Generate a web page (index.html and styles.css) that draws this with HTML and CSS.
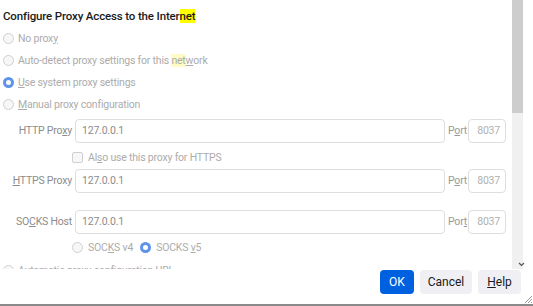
FILE: index.html
```html
<!DOCTYPE html>
<html>
<head>
<meta charset="utf-8">
<link rel="stylesheet" href="styles.css">
</head>
<body>
<div class="dialog">
  <div class="scroller">
    <div class="content">
      <h1 class="title">Configure Proxy Access to the Inter<mark class="hl">net</mark></h1>
      <div class="radio-row"><span class="radio"></span><span>No prox<u>y</u></span></div>
      <div class="radio-row"><span class="radio"></span><span>Auto-detect proxy settings for this <mark class="hl-soft">net</mark><u>w</u>ork</span></div>
      <div class="radio-row"><span class="radio checked"></span><span><u>U</u>se system proxy settings</span></div>
      <div class="radio-row"><span class="radio"></span><span><u>M</u>anual proxy configuration</span></div>

      <div class="field-row">
        <span class="field-label">HTTP Pro<u>x</u>y</span>
        <span class="input host">127.0.0.1</span>
        <span class="port-label">P<u>o</u>rt</span>
        <span class="input port">8037</span>
      </div>
      <div class="check-row"><span class="checkbox"></span><span>Al<u>s</u>o use this proxy for HTTPS</span></div>
      <div class="field-row">
        <span class="field-label"><u>H</u>TTPS Proxy</span>
        <span class="input host">127.0.0.1</span>
        <span class="port-label">P<u>o</u>rt</span>
        <span class="input port">8037</span>
      </div>
      <div class="field-row socks">
        <span class="field-label">SO<u>C</u>KS Host</span>
        <span class="input host">127.0.0.1</span>
        <span class="port-label">Por<u>t</u></span>
        <span class="input port">8037</span>
      </div>
      <div class="socks-row">
        <span class="radio-inline"><span class="radio"></span><span>SOC<u>K</u>S v4</span></span>
        <span class="radio-inline"><span class="radio checked"></span><span>SOCKS <u>v</u>5</span></span>
      </div>
      <div class="radio-row auto"><span class="radio"></span><span>Automatic proxy configuration URL</span></div>
    </div>
    <div class="scrollbar">
      <div class="thumb"></div>
      <div class="track"></div>
      <svg class="arrow" width="7" height="5" viewBox="0 0 7 5"><path d="M1 1 L3.5 3.5 L6 1" fill="none" stroke="#555" stroke-width="1.2"/></svg>
    </div>
  </div>
  <div class="footer">
    <button class="btn primary">OK</button>
    <button class="btn">Cancel</button>
    <button class="btn"><u>H</u>elp</button>
  </div>
  <svg class="grip" width="9" height="9" viewBox="0 0 9 9"><path d="M8 1 L1 8 M8 4 L4 8 M8 7 L7 8" stroke="#999" stroke-width="1"/></svg>
</div>
</body>
</html>
```

FILE: styles.css
```css
html, body {
  margin: 0;
  padding: 0;
  background: #fff;
  overflow: hidden;
}
body {
  font-family: Roboto, "Open Sans", sans-serif;
  font-size: 10.5px;
  letter-spacing: -0.2px;
  color: #acacac;
}
.dialog {
  position: relative;
  width: 533px;
  height: 306px;
  display: flex;
  flex-direction: column;
  border-bottom: 2px solid #8a8a8a;
  box-sizing: border-box;
}
.scroller {
  height: 269px;
  display: flex;
  overflow: hidden;
}
.content {
  width: 512px;
  padding-left: 3px;
  box-sizing: border-box;
}
.title {
  margin: 0;
  height: 27px;
  padding-top: 7px;
  box-sizing: border-box;
  font-size: 11.5px;
  font-weight: 500;
  letter-spacing: -0.15px;
  color: #1a1a1a;
  line-height: 18px;
}
.hl {
  background: #ffff00;
  color: #1a1a1a;
}
.hl-soft {
  background: #fffbc4;
  color: #acacac;
}
u { text-decoration: underline; }
.radio-row {
  height: 22px;
  display: flex;
  align-items: center;
  gap: 4px;
}
.radio {
  width: 9px;
  height: 9px;
  border: 1px solid #d0d0d0;
  border-radius: 50%;
  background: #f7f7f7;
  flex: none;
}
.radio.checked {
  width: 5px;
  height: 5px;
  border: 3px solid #5e93ea;
  background: #fff;
}
.field-row {
  display: flex;
  align-items: center;
  height: 25px;
  margin-top: 3px;
}
.field-label {
  width: 69px;
  text-align: right;
  color: #8c8c8c;
  margin-right: 3px;
  flex: none;
}
.input {
  height: 24px;
  box-sizing: border-box;
  border: 1px solid #dedede;
  border-radius: 4px;
  display: flex;
  align-items: center;
  color: #8c8c8c;
}
.host {
  width: 370px;
  padding-left: 6px;
}
.port-label {
  width: 23px;
  padding-left: 3px;
  box-sizing: border-box;
  color: #9a9a9a;
}
.port {
  width: 38px;
  justify-content: flex-end;
  padding-right: 5px;
  color: #b0b0b0;
}
.check-row {
  height: 28px;
  display: flex;
  align-items: center;
  gap: 5px;
  padding-left: 69px;
}
.checkbox {
  width: 9px;
  height: 9px;
  border: 1px solid #d0d0d0;
  border-radius: 2px;
  background: #f7f7f7;
}
.check-row + .field-row { margin-top: -3px; }
.field-row.socks { margin-top: 16px; }
.socks-row {
  height: 27px;
  display: flex;
  align-items: center;
  gap: 7px;
  padding-left: 69px;
}
.radio-inline {
  display: flex;
  align-items: center;
  gap: 5px;
}
.radio-row.auto { margin-top: -2px; }
.scrollbar {
  width: 11px;
  display: flex;
  flex-direction: column;
  background: #f0f0f0;
  position: relative;
}
.thumb {
  height: 113px;
  background: #cdcdcd;
}
.track { flex: 1; }
.arrow {
  position: absolute;
  left: 6px;
  bottom: 2px;
}
.footer {
  display: flex;
  justify-content: flex-end;
  gap: 6px;
  padding: 1px 12px 0 0;
}
.btn {
  font-family: Roboto, "Open Sans", sans-serif;
  font-size: 12px;
  height: 24px;
  border: none;
  border-radius: 4px;
  background: #f0f0f4;
  color: #1a1a1a;
  padding: 0;
}
.btn.primary {
  width: 34px;
  background: #0061e0;
  color: #fff;
}
.btn:nth-child(2) { width: 52px; }
.btn:nth-child(3) { width: 43px; }
.grip {
  position: absolute;
  right: 0;
  bottom: 0;
}
```
